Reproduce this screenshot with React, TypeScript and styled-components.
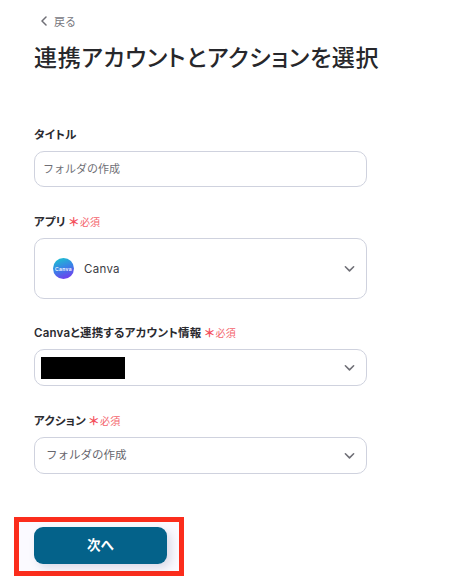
import React from "react";
import styled, { createGlobalStyle } from "styled-components";

const GlobalStyle = createGlobalStyle`
  html, body {
    margin: 0;
    padding: 0;
    background: #ffffff;
    font-family: Inter, "Noto Sans CJK JP", "Noto Sans", sans-serif;
  }
`;

function Chevron() {
  return (
    <ChevronIcon viewBox="0 0 12 8" fill="none">
      <path
        d="M1.5 1.5 6 6l4.5-4.5"
        stroke="#6f6f76"
        strokeWidth="1.7"
        strokeLinecap="round"
        strokeLinejoin="round"
      />
    </ChevronIcon>
  );
}

function CanvaLogo() {
  return (
    <LogoDisc>
      <span>Canva</span>
    </LogoDisc>
  );
}

function FieldLabel({ text, required }: { text: string; required?: boolean }) {
  return (
    <Label>
      <span>{text}</span>
      {required ? (
        <Required>
          <Star>＊</Star>
          必須
        </Required>
      ) : null}
    </Label>
  );
}

export default function App() {
  return (
    <Page>
      <GlobalStyle />
      <Back>
        <BackIcon viewBox="0 0 8 10" fill="none">
          <path
            d="M6 1 2 5l4 4"
            stroke="#6f6f76"
            strokeWidth="1.5"
            strokeLinecap="round"
            strokeLinejoin="round"
          />
        </BackIcon>
        戻る
      </Back>
      <Title>連携アカウントとアクションを選択</Title>

      <Field $top={53}>
        <FieldLabel text="タイトル" />
        <TextBox>フォルダの作成</TextBox>
      </Field>

      <Field $top={27}>
        <FieldLabel text="アプリ" required />
        <Select $height={61} $padLeft={18}>
          <AppName>
            <CanvaLogo />
            Canva
          </AppName>
          <Chevron />
        </Select>
      </Field>

      <Field $top={26}>
        <FieldLabel text="Canvaと連携するアカウント情報" required />
        <Select $height={37} $padLeft={6}>
          <Redacted />
          <Chevron />
        </Select>
      </Field>

      <Field $top={27}>
        <FieldLabel text="アクション" required />
        <Select $height={37} $padLeft={11}>
          <SelectValue>フォルダの作成</SelectValue>
          <Chevron />
        </Select>
      </Field>

      <Highlight>
        <NextButton>次へ</NextButton>
      </Highlight>
    </Page>
  );
}

const Page = styled.div`
  width: 472px;
  height: 576px;
  box-sizing: border-box;
  padding: 13px 0 0 34px;
  background: #ffffff;
  overflow: hidden;
`;

const Back = styled.div`
  display: flex;
  align-items: center;
  gap: 6px;
  height: 16px;
  padding-left: 6px;
  font-size: 11px;
  color: #77777e;
`;

const BackIcon = styled.svg`
  width: 8px;
  height: 10px;
`;

const Title = styled.h1`
  margin: 13px 0 0;
  height: 32px;
  font-size: 23px;
  line-height: 32px;
  font-weight: 500;
  font-feature-settings: "palt";
  letter-spacing: 0.65px;
  color: #27272b;
  white-space: nowrap;
`;

const Field = styled.div<{ $top: number }>`
  width: 333px;
  margin-top: ${(props) => props.$top}px;
`;

const Label = styled.div`
  display: flex;
  align-items: center;
  height: 16px;
  margin-bottom: 8px;
  font-size: 11.5px;
  line-height: 16px;
  font-weight: 600;
  font-feature-settings: "palt";
  letter-spacing: 0.2px;
  color: #2b2b30;
`;

const Required = styled.span`
  display: flex;
  align-items: center;
  margin-left: 3px;
  font-size: 10px;
  font-weight: 400;
  color: #f4646c;
`;

const Star = styled.span`
  font-size: 12px;
  font-weight: 700;
  line-height: 16px;
  margin-right: 1px;
  padding-top: 2px;
  color: #f4505c;
`;

const TextBox = styled.div`
  display: flex;
  align-items: center;
  box-sizing: border-box;
  height: 36px;
  padding: 0 0 2px 8px;
  border: 1px solid #cfd2de;
  border-radius: 10px;
  font-size: 11px;
  color: #6f6f76;
`;

const Select = styled.div<{ $height: number; $padLeft: number }>`
  display: flex;
  align-items: center;
  justify-content: space-between;
  box-sizing: border-box;
  height: ${(props) => props.$height}px;
  padding: 0 11px 0 ${(props) => props.$padLeft}px;
  border: 1px solid #cfd2de;
  border-radius: 10px;
`;

const AppName = styled.div`
  display: flex;
  align-items: center;
  gap: 10px;
  font-size: 11.5px;
  letter-spacing: 0.3px;
  color: #3b3b42;
`;

const LogoDisc = styled.div`
  display: flex;
  align-items: center;
  justify-content: center;
  width: 21px;
  height: 21px;
  border-radius: 50%;
  background: linear-gradient(160deg, #1bc3cf 5%, #3b7fe8 50%, #7a35ee 95%);
  span {
    font-size: 5px;
    font-weight: 600;
    color: #ffffff;
  }
`;

const Redacted = styled.div`
  width: 84px;
  height: 22px;
  background: #000000;
`;

const SelectValue = styled.span`
  margin-top: -3px;
  font-size: 11.5px;
  color: #66666d;
`;

const ChevronIcon = styled.svg`
  width: 11px;
  height: 8px;
`;

const Highlight = styled.div`
  box-sizing: border-box;
  width: 170px;
  height: 59px;
  margin: 43px 0 0 -20px;
  padding: 5px 0 0 15px;
  border: 5px solid #fb2d1c;
  background: #fbfaff;
`;

const NextButton = styled.button`
  display: block;
  width: 133px;
  height: 37px;
  padding: 0 0 3px;
  border: none;
  border-radius: 9px;
  background: #04628a;
  box-shadow: 4px 4px 10px rgba(70, 80, 120, 0.18);
  font-family: inherit;
  font-size: 13.5px;
  font-weight: 700;
  color: #ffffff;
`;
